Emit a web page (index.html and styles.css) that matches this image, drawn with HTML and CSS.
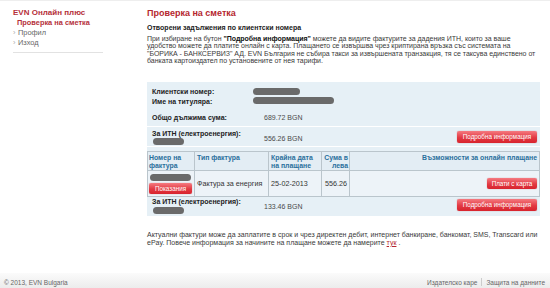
FILE: index.html
```html
<!DOCTYPE html>
<html lang="bg">
<head>
<meta charset="utf-8">
<title>Проверка на сметка</title>
<link rel="stylesheet" href="styles.css">
</head>
<body>
<div class="wrap">
  <div class="page">
    <aside class="side">
      <div class="side-title">EVN Онлайн плюс</div>
      <div class="side-current">Проверка на сметка</div>
      <div class="side-link"><span class="arr">›</span>Профил</div>
      <div class="side-link"><span class="arr">›</span>Изход</div>
      <div class="side-rule"></div>
    </aside>
    <main class="main">
      <h1 class="title">Проверка на сметка</h1>
      <h2 class="subtitle">Отворени задължения по клиентски номера</h2>
      <p class="intro">При избиране на бутон <b>"Подробна информация"</b> можете да видите фактурите за дадения ИТН, които за ваше<br>удобство можете да платите онлайн с карта. Плащането се извършва чрез криптирана връзка със системата на<br>"БОРИКА - БАНКСЕРВИЗ" АД. EVN България не събира такси за извършената транзакция, тя се таксува единствено от<br>банката картоиздател по установените от нея тарифи.</p>

      <div class="box">
        <div class="row-client">
          <div class="labels">
            <div class="lbl">Клиентски номер:</div>
            <div class="lbl">Име на титуляра:</div>
          </div>
          <div class="pills">
            <span class="pill pill-a"></span>
            <span class="pill pill-b"></span>
          </div>
        </div>
        <div class="row-total">
          <div class="lbl total-lbl">Общо дължима сума:</div>
          <div class="val">689.72 BGN</div>
        </div>
        <div class="row-itn row-sep">
          <div class="itn-lbl">
            <div class="lbl">За ИТН (електроенергия):</div>
            <span class="pill pill-c"></span>
          </div>
          <div class="val">556.26 BGN</div>
          <span class="btn btn-info">Подробна информация</span>
        </div>

        <table class="inv">
          <colgroup>
            <col class="c1"><col class="c2"><col class="c3"><col class="c4"><col class="c5">
          </colgroup>
          <thead>
            <tr>
              <th class="l">Номер на фактура</th>
              <th class="l">Тип фактура</th>
              <th class="l">Крайна дата на плащане</th>
              <th class="r sum">Сума в лева</th>
              <th class="r">Възможности за онлайн плащане</th>
            </tr>
          </thead>
          <tbody>
            <tr>
              <td class="num"><span class="pill pill-d"></span><span class="btn btn-small">Показания</span></td>
              <td>Фактура за енергия</td>
              <td>25-02-2013</td>
              <td class="r">556.26</td>
              <td class="r"><span class="btn btn-pay">Плати с карта</span></td>
            </tr>
          </tbody>
        </table>

        <div class="row-itn row-last">
          <div class="itn-lbl">
            <div class="lbl">За ИТН (електроенергия):</div>
            <span class="pill pill-c"></span>
          </div>
          <div class="val">133.46 BGN</div>
          <span class="btn btn-info">Подробна информация</span>
        </div>
      </div>

      <p class="note">Актуални фактури може да заплатите в срок и чрез директен дебит, интернет банкиране, банкомат, SMS, Transcard или<br>ePay. Повече информация за начините на плащане можете да намерите <a class="link" href="#">тук</a> .</p>
    </main>
  </div>
  <footer class="foot">
    <span class="copy">© 2013, EVN Bulgaria</span>
    <span class="foot-links"><span class="flink">Издателско каре</span><span class="fdiv"></span><span class="flink">Защита на данните</span></span>
  </footer>
</div>
</body>
</html>
```

FILE: styles.css
```css
* { box-sizing: border-box; }
html, body { margin: 0; padding: 0; background: #fff; }
body {
  font-family: "Liberation Sans", Arial, sans-serif;
  font-size: 7px;
  color: #333;
}
.wrap {
  height: 288px;
  display: flex;
  flex-direction: column;
  overflow: hidden;
  border-top: 1px solid #eeeeee;
}
.page { display: flex; }

/* sidebar */
.side { width: 147px; padding: 7px 0 0 13px; flex: none; }
.side-title { font-size: 8px; line-height: 10px; font-weight: bold; color: #b5303a; }
.side-current { font-size: 7.4px; line-height: 10px; font-weight: bold; color: #b5303a; padding-left: 4px; }
.side-link { font-size: 7.4px; line-height: 10px; color: #666; }
.side-link .arr { color: #aaa; display: inline-block; width: 5px; }
.side-rule { width: 90px; border-top: 1px solid #e2e2e2; margin-top: 4px; }

/* main */
.main { width: 393px; padding-top: 7px; flex: none; }
.title { margin: 0 0 5px; font-size: 9px; line-height: 10px; font-weight: bold; color: #b5262e; }
.subtitle { margin: 0; font-size: 7px; line-height: 9px; font-weight: bold; color: #222; }
.intro { margin: 3px 0 0; line-height: 7.3px; white-space: nowrap; color: #3a3a3a; letter-spacing: -0.03px; }
.intro b { color: #111; }

.box { margin-top: 18px; background: #e6f0f6; padding-bottom: 1px; }
.lbl { font-weight: bold; color: #222; line-height: 10px; }
.val { color: #4a4a4a; }

.row-client { display: flex; padding: 4.5px 0 0 5px; }
.labels { width: 101px; }
.pills { display: flex; flex-direction: column; padding-top: 1.5px; }
.pill { display: block; height: 7px; border-radius: 4px; background: #6a6a6a; filter: blur(0.6px); }
.pill-a { width: 47px; margin-bottom: 2px; }
.pill-b { width: 81px; }

.row-total { display: flex; align-items: center; padding: 6px 0 3.5px 5px; border-bottom: 1px solid #fff; }
.total-lbl { width: 112px; }

.row-itn { display: flex; align-items: center; padding: 1.5px 3px 1px 5px; }
.row-sep { border-bottom: 1px solid #fff; }
.itn-lbl { width: 112px; }
.itn-lbl .lbl { line-height: 9px; }
.pill-c { width: 31px; margin: 0.5px 0 0 1px; }
.row-itn .val { flex: 1; margin-top: 3px; }

.btn {
  display: inline-block;
  color: #fff;
  font-size: 6.3px;
  line-height: 11px;
  height: 11px;
  padding: 0 5px;
  border-radius: 2px;
  background: linear-gradient(#f57a80, #e23a43 55%, #d8232d);
  box-shadow: 0 0 1px rgba(150, 20, 30, 0.6);
  white-space: nowrap;
  text-align: center;
}
.btn-info { width: 80px; height: 12px; line-height: 12px; padding: 0; }
.btn-pay { width: 50px; padding: 0; }
.btn-small { width: 43px; padding: 0; margin-top: 2px; }

/* table */
.inv {
  margin-top: 4px;
  width: 392px;
  border-collapse: collapse;
  table-layout: fixed;
}
.c1 { width: 47px; }
.c2 { width: 74px; }
.c3 { width: 53px; }
.c4 { width: 28px; }
.c5 { width: 190px; }
.inv th, .inv td { border: 1px solid #bac5cc; }
.inv th {
  background: #e3edf4;
  color: #2a6f9c;
  font-weight: bold;
  font-size: 6.9px;
  line-height: 8px;
  padding: 2px 2px 0;
  vertical-align: top;
  height: 19px;
}
.inv th.l { text-align: left; }
.inv th.r { text-align: right; }
.inv th.sum { padding-left: 0; padding-right: 1px; }
.inv th:first-child { padding-left: 1px; }
.inv td {
  background: #edf3f8;
  color: #333;
  padding: 0 2px;
  height: 26px;
  vertical-align: middle;
  white-space: nowrap;
  font-size: 7.2px;
}
.inv td.r { text-align: right; }
.inv td.num { padding: 1px 0 1px 1px; }
.pill-d { width: 41px; margin-left: 1px; }

.row-last { padding-top: 0; padding-bottom: 1px; }

.note { margin: 15px 0 0; line-height: 8px; white-space: nowrap; color: #3a3a3a; }
.link { color: #b5262e; text-decoration: underline; }

/* footer */
.foot {
  margin-top: auto;
  height: 15px;
  display: flex;
  justify-content: space-between;
  align-items: center;
  padding: 3px 5px 0 4px;
  background: linear-gradient(#fbfbfb, #ececec);
  font-size: 6.5px;
  color: #666;
}
.foot-links { display: flex; align-items: center; }
.fdiv { width: 1px; height: 8px; background: #ccc; margin: 0 4px; }
```
